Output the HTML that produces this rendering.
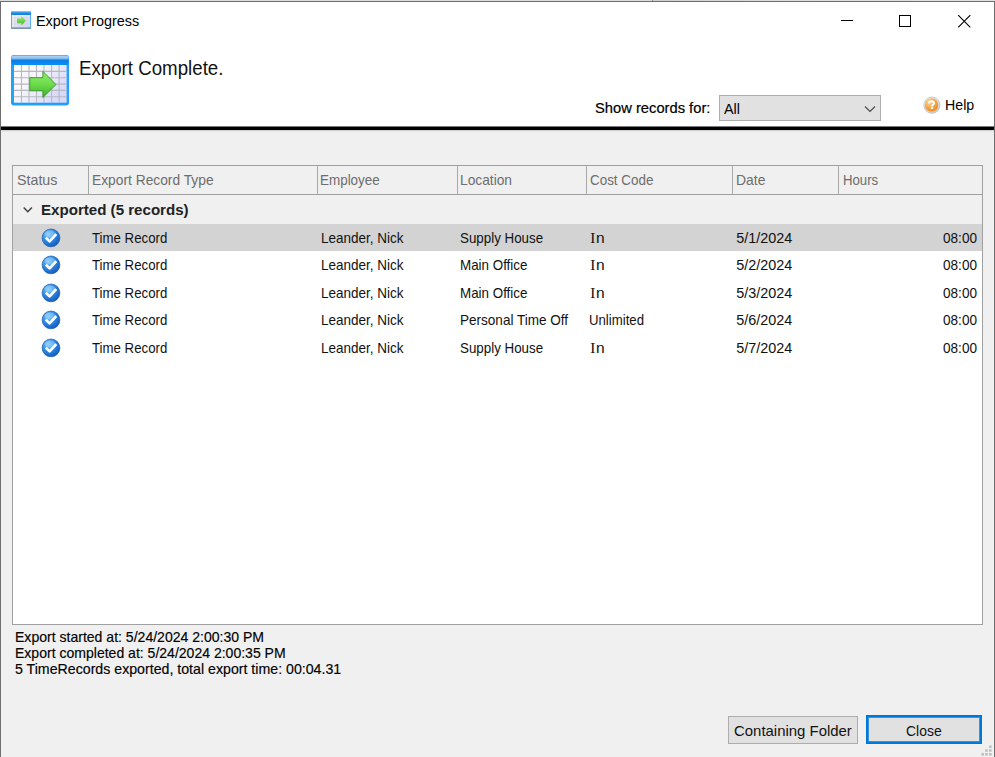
<!DOCTYPE html>
<html><head><meta charset="utf-8">
<style>
*{margin:0;padding:0;box-sizing:border-box}
html,body{width:995px;height:757px;overflow:hidden;background:#dcdcdc;font-family:"Liberation Sans",sans-serif;color:#000}
.a{position:absolute}
.t{position:absolute;white-space:nowrap;line-height:1;transform-origin:0 0}
.ic{position:absolute}
</style></head><body>
<!-- window frame -->
<div class="a" style="left:0;top:1px;width:995px;height:756px;background:#f0f0f0;border-left:1px solid #6e6e6e;border-top:1px solid #6e6e6e;border-right:1px solid #6e6e6e"></div>
<div class="a" style="left:1px;top:2px;width:993px;height:124px;background:#fff"></div>
<div class="a" style="left:653px;top:0;width:342px;height:1px;background:linear-gradient(90deg,#cfcfcf,#dedede 40%,#e0e0e0)"></div>
<div class="a" style="left:652px;top:0;width:1px;height:1px;background:#8a8a8a"></div>
<div class="a" style="left:1px;top:126px;width:993px;height:1px;background:#7a7a7a"></div>
<div class="a" style="left:1px;top:127px;width:993px;height:3px;background:#000"></div>
<div class="a" style="left:1px;top:130px;width:993px;height:1px;background:#d4d4d4"></div>
<div class="a" style="left:1px;top:131px;width:993px;height:1px;background:#e6e6e6"></div>

<!-- title bar icon -->
<svg class="a" style="left:11px;top:11px" width="20" height="18" viewBox="0 0 20 18">
  <defs>
    <linearGradient id="sh" x1="0" y1="0" x2="0" y2="1"><stop offset="0" stop-color="#9fd6fb"/><stop offset="0.5" stop-color="#1b8be8"/><stop offset="1" stop-color="#1680e0"/></linearGradient>
    <linearGradient id="sg" x1="0" y1="0" x2="1" y2="1"><stop offset="0" stop-color="#f4f4f8"/><stop offset="1" stop-color="#d4d4f4"/></linearGradient>
    <linearGradient id="sa" x1="0" y1="0" x2="0" y2="1"><stop offset="0" stop-color="#8ef26a"/><stop offset="1" stop-color="#45bb30"/></linearGradient>
  </defs>
  <rect x="0" y="0" width="20" height="18" rx="1.5" fill="#55aef0"/>
  <rect x="0" y="0" width="20" height="4" rx="1" fill="url(#sh)"/>
  <rect x="1" y="4" width="18" height="12.5" fill="url(#sg)"/>
  <g stroke="#d0d0d8" stroke-width="0.6"><path d="M4 4v12.5M7 4v12.5M10 4v12.5M13 4v12.5M16 4v12.5M1 7h18M1 10h18M1 13h18"/></g>
  <rect x="0" y="16.5" width="20" height="1.5" rx="0.7" fill="#7897b5"/>
  <path d="M6 7.6h4.4V5.1l4.6 4.7-4.6 4.7v-2.2H6z" fill="url(#sa)"/>
</svg>
<!-- caption buttons -->
<div class="a" style="left:841px;top:20px;width:12px;height:1px;background:#000"></div>
<div class="a" style="left:899px;top:15px;width:12px;height:12px;border:1px solid #000"></div>
<svg class="a" style="left:957px;top:14px" width="15" height="15" viewBox="0 0 15 15"><path d="M1.2 1.2L13.3 13.3M13.3 1.2L1.2 13.3" stroke="#000" stroke-width="1.1"/></svg>

<!-- big icon -->
<svg class="a" style="left:11px;top:55px" width="59" height="51" viewBox="0 0 59 51">
  <defs>
    <linearGradient id="bh" x1="0" y1="0" x2="0" y2="1"><stop offset="0" stop-color="#1aa5ff"/><stop offset="0.12" stop-color="#a9cdf2"/><stop offset="0.3" stop-color="#9cc6ef"/><stop offset="0.5" stop-color="#0a80e6"/><stop offset="1" stop-color="#0890f8"/></linearGradient>
    <linearGradient id="bg" x1="0" y1="0" x2="1" y2="0.6"><stop offset="0" stop-color="#ffffff"/><stop offset="0.45" stop-color="#f4f4fb"/><stop offset="1" stop-color="#d8d8fa"/></linearGradient>
    <linearGradient id="ba" x1="0" y1="0" x2="0" y2="1"><stop offset="0" stop-color="#90f06c"/><stop offset="0.5" stop-color="#6ddb4c"/><stop offset="1" stop-color="#3eae2c"/></linearGradient>
  </defs>
  <rect x="0" y="0" width="58" height="50.5" rx="3" fill="#22a2fb"/>
  <rect x="0.5" y="0" width="57" height="10.5" rx="3" fill="url(#bh)"/>
  <rect x="3" y="10" width="52.6" height="37.7" fill="url(#bg)"/>
  <g stroke="#b8b8c0" stroke-width="1.1">
    <path d="M10.5 10v37.7M18 10v37.7M25.5 10v37.7M33 10v37.7M40.6 10v37.7M48.1 10v37.7"/>
    <path d="M3 16.4h52.6M3 22.7h52.6M3 29.1h52.6M3 35.4h52.6M3 41.8h52.6"/>
  </g>
  <path d="M1 48.5h56" stroke="#4a8ac8" stroke-width="1.2" opacity="0.6"/>
  <path d="M18.8 22.7h13.1v-6.3l13.1 13.1-13.1 13v-6.7H18.8z" fill="url(#ba)" stroke="#2f9a22" stroke-width="0.9"/>
</svg>

<!-- combobox -->
<div class="a" style="left:719px;top:95px;width:162px;height:26px;background:#e1e1e1;border:1px solid #adadad"></div>
<svg class="a" style="left:864px;top:104.7px" width="12" height="8" viewBox="0 0 12 8"><path d="M1 1.5l5 5 5-5" fill="none" stroke="#484848" stroke-width="1.1"/></svg>
<!-- help icon -->
<svg class="a" style="left:922px;top:96px" width="19" height="19" viewBox="0 0 19 19">
  <defs>
   <radialGradient id="ghelp" cx="0.35" cy="0.3" r="0.8"><stop offset="0" stop-color="#ffd49a"/><stop offset="0.55" stop-color="#f7a444"/><stop offset="1" stop-color="#e8861a"/></radialGradient>
   <linearGradient id="gring" x1="0" y1="0" x2="0.6" y2="1"><stop offset="0" stop-color="#fafafa"/><stop offset="1" stop-color="#cfcfcf"/></linearGradient>
  </defs>
  <circle cx="9.9" cy="9.2" r="8.1" fill="url(#gring)" stroke="#b4b4b4" stroke-width="0.7"/>
  <circle cx="9.5" cy="8.9" r="6.7" fill="url(#ghelp)"/>
  <path d="M6.9 7.3C6.9 5.9 8 5.2 9.4 5.2C10.9 5.2 12 6 12 7.2C12 8.7 10.2 8.9 10 10.4" fill="none" stroke="#fff" stroke-width="2"/>
  <rect x="8.9" y="11.2" width="2.2" height="1.8" fill="#fff"/>
</svg>

<!-- grid -->
<div class="a" style="left:12px;top:165px;width:971px;height:460px;background:#fff;border:1px solid #a0a0a0"></div>
<div class="a" style="left:13px;top:166px;width:969px;height:58px;background:#f0f0f0"></div>
<div class="a" style="left:13px;top:194px;width:969px;height:1px;background:#a0a0a0"></div>
<div class="a" style="left:88px;top:166px;width:1px;height:28px;background:#a8a8a8"></div>
<div class="a" style="left:317px;top:166px;width:1px;height:28px;background:#a8a8a8"></div>
<div class="a" style="left:457px;top:166px;width:1px;height:28px;background:#a8a8a8"></div>
<div class="a" style="left:586px;top:166px;width:1px;height:28px;background:#a8a8a8"></div>
<div class="a" style="left:732px;top:166px;width:1px;height:28px;background:#a8a8a8"></div>
<div class="a" style="left:838px;top:166px;width:1px;height:28px;background:#a8a8a8"></div>
<svg class="a" style="left:22px;top:205px" width="12" height="9" viewBox="0 0 12 9"><path d="M1.7 2.6L5.8 6.8L9.9 2.6" fill="none" stroke="#404040" stroke-width="1.5"/></svg>
<div class="a" style="left:13px;top:224px;width:969px;height:27px;background:#d3d3d3"></div>

<svg width="0" height="0" style="position:absolute"><defs>
<radialGradient id="gchk" cx="0.35" cy="0.3" r="0.75"><stop offset="0" stop-color="#7cc8ff"/><stop offset="0.5" stop-color="#2d8ae6"/><stop offset="1" stop-color="#1559b8"/></radialGradient>
</defs></svg>
<svg class="ic" style="left:41px;top:227.5px" width="20" height="20" viewBox="0 0 20 20"><circle cx="10" cy="9.9" r="8.9" fill="url(#gchk)" stroke="#1a5aa8" stroke-width="0.7"/><ellipse cx="9" cy="6" rx="5.5" ry="3.5" fill="#bfe6ff" opacity="0.35"/><path d="M4.8 9.6L8.6 13.4L15.3 6.2" fill="none" stroke="#fff" stroke-width="2.7" stroke-linejoin="round"/></svg>
<svg class="ic" style="left:41px;top:255.0px" width="20" height="20" viewBox="0 0 20 20"><circle cx="10" cy="9.9" r="8.9" fill="url(#gchk)" stroke="#1a5aa8" stroke-width="0.7"/><ellipse cx="9" cy="6" rx="5.5" ry="3.5" fill="#bfe6ff" opacity="0.35"/><path d="M4.8 9.6L8.6 13.4L15.3 6.2" fill="none" stroke="#fff" stroke-width="2.7" stroke-linejoin="round"/></svg>
<svg class="ic" style="left:41px;top:282.5px" width="20" height="20" viewBox="0 0 20 20"><circle cx="10" cy="9.9" r="8.9" fill="url(#gchk)" stroke="#1a5aa8" stroke-width="0.7"/><ellipse cx="9" cy="6" rx="5.5" ry="3.5" fill="#bfe6ff" opacity="0.35"/><path d="M4.8 9.6L8.6 13.4L15.3 6.2" fill="none" stroke="#fff" stroke-width="2.7" stroke-linejoin="round"/></svg>
<svg class="ic" style="left:41px;top:310.0px" width="20" height="20" viewBox="0 0 20 20"><circle cx="10" cy="9.9" r="8.9" fill="url(#gchk)" stroke="#1a5aa8" stroke-width="0.7"/><ellipse cx="9" cy="6" rx="5.5" ry="3.5" fill="#bfe6ff" opacity="0.35"/><path d="M4.8 9.6L8.6 13.4L15.3 6.2" fill="none" stroke="#fff" stroke-width="2.7" stroke-linejoin="round"/></svg>
<svg class="ic" style="left:41px;top:337.5px" width="20" height="20" viewBox="0 0 20 20"><circle cx="10" cy="9.9" r="8.9" fill="url(#gchk)" stroke="#1a5aa8" stroke-width="0.7"/><ellipse cx="9" cy="6" rx="5.5" ry="3.5" fill="#bfe6ff" opacity="0.35"/><path d="M4.8 9.6L8.6 13.4L15.3 6.2" fill="none" stroke="#fff" stroke-width="2.7" stroke-linejoin="round"/></svg>

<!-- buttons -->
<div class="a" style="left:728px;top:716px;width:130px;height:28px;background:#e1e1e1;border:1px solid #adadad"></div>
<div class="a" style="left:866px;top:715px;width:116px;height:29px;background:#e1e1e1;border:2px solid #0078d7;box-shadow:inset 0 0 0 1px rgba(0,120,215,0.75)"></div>
<!-- resize grip -->
<svg class="a" style="left:975px;top:740px" width="20" height="17" viewBox="0 0 20 17"><g fill="#bdbdbd"><rect x="14.05" y="5.45" width="2.5" height="2.5"/><rect x="10.25" y="9.25" width="2.5" height="2.5"/><rect x="14.05" y="9.25" width="2.5" height="2.5"/><rect x="6.45" y="13.05" width="2.5" height="2.5"/><rect x="10.25" y="13.05" width="2.5" height="2.5"/><rect x="14.05" y="13.05" width="2.5" height="2.5"/></g></svg>
<div class="t" style="left:36.4px;top:13px;font-size:15.4px;transform:scaleX(0.936);color:#000">Export Progress</div>
<div class="t" style="left:78.6px;top:58px;font-size:20.2px;transform:scaleX(0.926);color:#111">Export Complete.</div>
<div class="t" style="left:594.5px;top:101px;font-size:14.6px;transform:scaleX(1.009);color:#000;-webkit-text-stroke:0.2px #000">Show records for:</div>
<div class="t" style="left:724px;top:102px;font-size:14.6px;transform:scaleX(0.981);color:#000">All</div>
<div class="t" style="left:945.2px;top:98px;font-size:14.6px;transform:scaleX(0.972);color:#000">Help</div>
<div class="t" style="left:16.6px;top:173px;font-size:14.4px;transform:scaleX(0.99);color:#6d6d6d">Status</div>
<div class="t" style="left:91.8px;top:173px;font-size:14.4px;transform:scaleX(0.958);color:#6d6d6d">Export Record Type</div>
<div class="t" style="left:319.8px;top:173px;font-size:14.4px;transform:scaleX(0.934);color:#6d6d6d">Employee</div>
<div class="t" style="left:460.4px;top:173px;font-size:14.4px;transform:scaleX(0.956);color:#6d6d6d">Location</div>
<div class="t" style="left:590.2px;top:173px;font-size:14.4px;transform:scaleX(0.932);color:#6d6d6d">Cost Code</div>
<div class="t" style="left:736.2px;top:173px;font-size:14.4px;transform:scaleX(0.966);color:#6d6d6d">Date</div>
<div class="t" style="left:842.6px;top:173px;font-size:14.4px;transform:scaleX(0.916);color:#6d6d6d">Hours</div>
<div class="t" style="left:41.3px;top:203px;font-size:14.4px;transform:scaleX(1.049);color:#222;font-weight:bold">Exported (5 records)</div>
<div class="t" style="left:92px;top:231px;font-size:14.4px;transform:scaleX(0.92);color:#111">Time Record</div>
<div class="t" style="left:320.7px;top:231px;font-size:14.4px;transform:scaleX(0.938);color:#111">Leander, Nick</div>
<div class="t" style="left:460.4px;top:231px;font-size:14.4px;transform:scaleX(0.928);color:#111">Supply House</div>
<div class="t" style="left:590.2px;top:230px;font-size:15.2px;color:#111"><span style="font-family:&quot;Liberation Serif&quot;,serif;font-size:15.2px">I</span></div>
<div class="t" style="left:596px;top:231px;font-size:14.4px;transform:scaleX(1.08);color:#111">n</div>
<div class="t" style="left:736.3px;top:231px;font-size:14.4px;color:#111">5/1/2024</div>
<div class="t" style="left:943.2px;top:231px;font-size:14.4px;transform:scaleX(0.944);color:#111">08:00</div>
<div class="t" style="left:92px;top:258px;font-size:14.4px;transform:scaleX(0.92);color:#111">Time Record</div>
<div class="t" style="left:320.7px;top:258px;font-size:14.4px;transform:scaleX(0.938);color:#111">Leander, Nick</div>
<div class="t" style="left:460.4px;top:258px;font-size:14.4px;transform:scaleX(0.93);color:#111">Main Office</div>
<div class="t" style="left:590.2px;top:257px;font-size:15.2px;color:#111"><span style="font-family:&quot;Liberation Serif&quot;,serif;font-size:15.2px">I</span></div>
<div class="t" style="left:596px;top:258px;font-size:14.4px;transform:scaleX(1.08);color:#111">n</div>
<div class="t" style="left:736.3px;top:258px;font-size:14.4px;color:#111">5/2/2024</div>
<div class="t" style="left:943.2px;top:258px;font-size:14.4px;transform:scaleX(0.944);color:#111">08:00</div>
<div class="t" style="left:92px;top:286px;font-size:14.4px;transform:scaleX(0.92);color:#111">Time Record</div>
<div class="t" style="left:320.7px;top:286px;font-size:14.4px;transform:scaleX(0.938);color:#111">Leander, Nick</div>
<div class="t" style="left:460.4px;top:286px;font-size:14.4px;transform:scaleX(0.93);color:#111">Main Office</div>
<div class="t" style="left:590.2px;top:285px;font-size:15.2px;color:#111"><span style="font-family:&quot;Liberation Serif&quot;,serif;font-size:15.2px">I</span></div>
<div class="t" style="left:596px;top:286px;font-size:14.4px;transform:scaleX(1.08);color:#111">n</div>
<div class="t" style="left:736.3px;top:286px;font-size:14.4px;color:#111">5/3/2024</div>
<div class="t" style="left:943.2px;top:286px;font-size:14.4px;transform:scaleX(0.944);color:#111">08:00</div>
<div class="t" style="left:92px;top:313px;font-size:14.4px;transform:scaleX(0.92);color:#111">Time Record</div>
<div class="t" style="left:320.7px;top:313px;font-size:14.4px;transform:scaleX(0.938);color:#111">Leander, Nick</div>
<div class="t" style="left:460.4px;top:313px;font-size:14.4px;transform:scaleX(0.941);color:#111">Personal Time Off</div>
<div class="t" style="left:589.4px;top:313px;font-size:14.4px;transform:scaleX(0.917);color:#111">Unlimited</div>
<div class="t" style="left:736.3px;top:313px;font-size:14.4px;color:#111">5/6/2024</div>
<div class="t" style="left:943.2px;top:313px;font-size:14.4px;transform:scaleX(0.944);color:#111">08:00</div>
<div class="t" style="left:92px;top:341px;font-size:14.4px;transform:scaleX(0.92);color:#111">Time Record</div>
<div class="t" style="left:320.7px;top:341px;font-size:14.4px;transform:scaleX(0.938);color:#111">Leander, Nick</div>
<div class="t" style="left:460.4px;top:341px;font-size:14.4px;transform:scaleX(0.928);color:#111">Supply House</div>
<div class="t" style="left:590.2px;top:340px;font-size:15.2px;color:#111"><span style="font-family:&quot;Liberation Serif&quot;,serif;font-size:15.2px">I</span></div>
<div class="t" style="left:596px;top:341px;font-size:14.4px;transform:scaleX(1.08);color:#111">n</div>
<div class="t" style="left:736.3px;top:341px;font-size:14.4px;color:#111">5/7/2024</div>
<div class="t" style="left:943.2px;top:341px;font-size:14.4px;transform:scaleX(0.944);color:#111">08:00</div>
<div class="t" style="left:15px;top:630px;font-size:14.4px;transform:scaleX(0.976);color:#000;-webkit-text-stroke:0.15px #000">Export started at: 5/24/2024 2:00:30 PM</div>
<div class="t" style="left:15px;top:646px;font-size:14.4px;transform:scaleX(0.975);color:#000;-webkit-text-stroke:0.15px #000">Export completed at: 5/24/2024 2:00:35 PM</div>
<div class="t" style="left:15px;top:662px;font-size:14.4px;transform:scaleX(0.985);color:#000;-webkit-text-stroke:0.15px #000">5 TimeRecords exported, total export time: 00:04.31</div>
<div class="t" style="left:733.6px;top:724px;font-size:14.6px;transform:scaleX(1.023);color:#111">Containing Folder</div>
<div class="t" style="left:905.7px;top:724px;font-size:14.6px;transform:scaleX(0.956);color:#111">Close</div>
</body></html>
